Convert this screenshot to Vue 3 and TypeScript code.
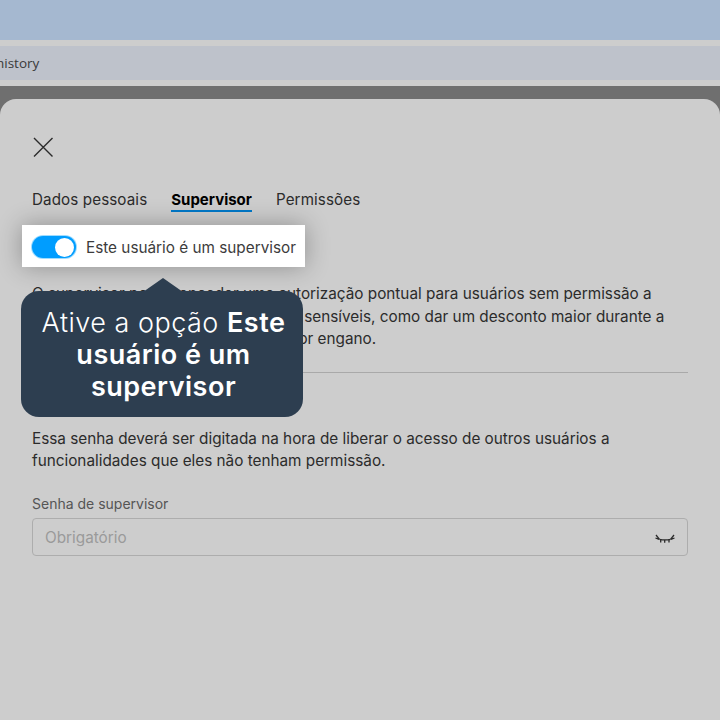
<script setup lang="ts">
const tabs = [
  { label: "Dados pessoais", active: false },
  { label: "Supervisor", active: true },
  { label: "Permissões", active: false },
];
</script>

<template>
  <div class="page">
    <div class="top-bar"></div>
    <div class="url-bar"><span>history</span></div>
    <div class="backdrop">
      <section class="sheet">
        <button class="close" aria-label="Fechar">
          <svg width="22" height="22" viewBox="0 0 22 22" fill="none" stroke="#2b2b2b" stroke-width="1.4">
            <path d="M2 2 L20.5 20.5 M20.5 2 L2 20.5" />
          </svg>
        </button>

        <nav class="tabs">
          <a v-for="tab in tabs" :key="tab.label" :class="{ active: tab.active }">{{ tab.label }}</a>
        </nav>

        <div class="spotlight">
          <span class="switch"><span class="knob"></span></span>
          <span>Este usuário é um supervisor</span>
        </div>

        <p class="intro">
          O supervisor pode conceder uma autorização pontual para usuários sem permissão a<br />
          usarem algumas das funcionalidades sensíveis, como dar um desconto maior durante a<br />
          venda, ou excluir um item marcado por engano.
        </p>

        <hr />

        <h3>Senha de supervisor</h3>
        <p class="hint">
          Essa senha deverá ser digitada na hora de liberar o acesso de outros usuários a<br />
          funcionalidades que eles não tenham permissão.
        </p>

        <label class="field-label">Senha de supervisor</label>
        <div class="field">
          <span class="placeholder">Obrigatório</span>
          <svg class="eye" width="22" height="11" viewBox="0 0 22 11" fill="none" stroke="#2b2b2b" stroke-width="1.3">
            <path d="M5.5 6.3 C9 7 13 7 16.5 6.3" />
            <path d="M2 2 L5.5 6.3 M20 2 L16.5 6.3 M1.5 5 L5 6.3 M20.5 5 L17 6.3" />
            <path d="M6.7 6.5 L6.7 9.5 M10.7 7 L10.7 9.8 M15 6.5 L15 9.5" />
          </svg>
        </div>

        <div class="tip">
          <span class="tip-arrow"></span>
          Ative a opção <b>Este usuário é um supervisor</b>
        </div>
      </section>
    </div>
  </div>
</template>

<style scoped>
.page {
  width: 720px;
  height: 720px;
  display: flex;
  flex-direction: column;
  background: #cdcdcd;
  overflow: hidden;
  font-family: Inter, "Liberation Sans", sans-serif;
  color: #2b2b2b;
}

.top-bar {
  height: 40px;
  flex: none;
  background: #a5b8d0;
}

.url-bar {
  height: 34px;
  flex: none;
  margin: 6px 0;
  background: #bec2cb;
  display: flex;
  align-items: center;
  font-family: "Open Sans", sans-serif;
  font-size: 13.5px;
  color: #3a3a3a;
  overflow: hidden;
}

.url-bar span {
  margin: -1px 0 0 -4px;
}

.backdrop {
  flex: 1;
  padding-top: 13px;
  background: #6f6f6f;
  display: flex;
}

.sheet {
  flex: 1;
  position: relative;
  background: #cdcdcd;
  border-radius: 16px 16px 0 0;
  padding: 37px 32px 0;
}

.close {
  display: block;
  width: 22px;
  height: 22px;
  padding: 0;
  border: 0;
  background: none;
}

.tabs {
  display: flex;
  gap: 24px;
  margin-top: 32px;
  font-size: 15.2px;
  line-height: 20px;
  letter-spacing: 0.1px;
}

.tabs a {
  border-bottom: 2px solid transparent;
}

.tabs a.active {
  font-size: 15px;
  font-weight: 700;
  letter-spacing: 0;
  color: #000;
  border-bottom-color: #0078c8;
}

.spotlight {
  position: relative;
  display: flex;
  align-items: center;
  gap: 10px;
  width: fit-content;
  height: 42px;
  box-sizing: border-box;
  margin: 13px 0 0 -10px;
  padding: 2px 9px 0 10px;
  background: #fff;
  font-size: 15.3px;
  color: #3c3c3c;
  box-shadow: 0 0 24px rgba(0, 0, 0, 0.3);
}

.switch {
  width: 44px;
  height: 22px;
  border-radius: 11px;
  background: #009dff;
  box-shadow: 0 0 0 1px #9fdcff;
  display: flex;
  justify-content: flex-end;
  align-items: center;
  padding: 1px 2px;
  box-sizing: border-box;
}

.knob {
  width: 19px;
  height: 19px;
  border-radius: 50%;
  background: #fff;
}

.intro,
.hint {
  margin: 0;
  font-size: 15.3px;
  white-space: nowrap;
}

.intro {
  margin-top: 16px;
  line-height: 22.5px;
}

.hint {
  margin-top: 17px;
  line-height: 22px;
}

hr {
  height: 1px;
  margin: 21px 0 0;
  border: 0;
  background: #a9a9a9;
}

h3 {
  margin: 16px 0 0;
  font-size: 15px;
  line-height: 22px;
  font-weight: 600;
}

.field-label {
  display: block;
  margin-top: 22px;
  font-size: 14px;
  line-height: 20px;
  color: #555;
}

.field {
  display: flex;
  align-items: center;
  justify-content: space-between;
  height: 38px;
  box-sizing: border-box;
  margin-top: 4px;
  padding: 0 11px 0 12px;
  border: 1px solid #adadad;
  border-radius: 4px;
  font-size: 15.3px;
  color: #9a9a9a;
}

.placeholder {
  margin-top: 2px;
}

.eye {
  margin-top: 3px;
}

.tip {
  position: absolute;
  left: 21px;
  top: 192px;
  width: 282px;
  height: 126px;
  box-sizing: border-box;
  padding: 16px 10px 16px 13px;
  border-radius: 18px;
  background: #2d3e50;
  color: #fff;
  font-size: 27px;
  line-height: 32px;
  text-align: center;
  font-weight: 300;
  letter-spacing: 0.5px;
}

.tip b {
  font-weight: 600;
}

.tip-arrow {
  position: absolute;
  left: 122px;
  top: -13px;
  width: 0;
  height: 0;
  border-left: 20px solid transparent;
  border-right: 20px solid transparent;
  border-bottom: 14px solid #2d3e50;
}
</style>
